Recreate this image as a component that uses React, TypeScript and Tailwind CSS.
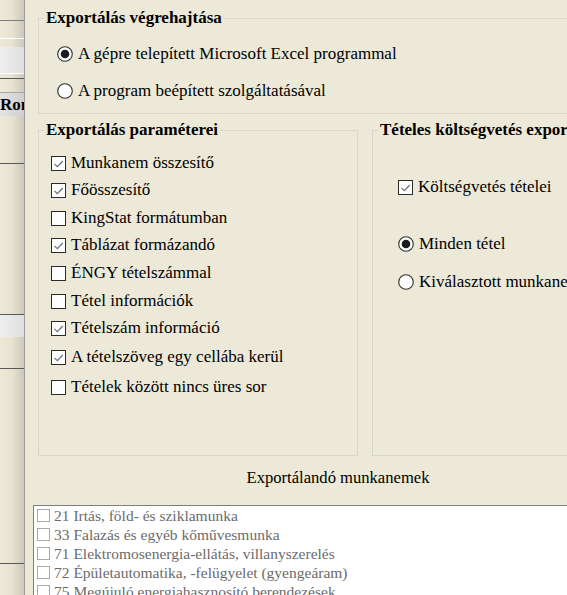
import type { ReactNode } from "react";

const serif = "font-['Liberation_Serif','Times_New_Roman',serif]";

function CheckBox({ checked }: { checked: boolean }) {
  return (
    <svg width="15" height="15" viewBox="0 0 15 15" className="shrink-0">
      <rect x="0.5" y="0.5" width="14" height="14" fill="#ffffff" stroke="#2a2a2a" />
      {checked && (
        <polyline
          points="3.5,7.8 6.3,10.6 11.8,5"
          fill="none"
          stroke="#6e6e6e"
          strokeWidth="1.2"
        />
      )}
    </svg>
  );
}

function Radio({ checked }: { checked: boolean }) {
  return (
    <svg width="16" height="16" viewBox="0 0 16 16" className="shrink-0">
      <circle cx="8" cy="8" r="7.3" fill="#ffffff" stroke="#2f2f2f" strokeWidth="1.1" />
      {checked && <circle cx="8" cy="8" r="4.3" fill="#1c1c1c" />}
    </svg>
  );
}

function Row({
  control,
  children,
  className = "",
}: {
  control: ReactNode;
  children: ReactNode;
  className?: string;
}) {
  return (
    <div className={`flex h-[20px] items-center whitespace-nowrap ${className}`}>
      {control}
      <span className="ml-[5px] text-[17px] leading-[20px] text-black">{children}</span>
    </div>
  );
}

function Legend({ children }: { children: ReactNode }) {
  return (
    <legend className="ml-[5px] whitespace-nowrap px-[2px] text-[17px] font-bold leading-[18px] text-black">
      {children}
    </legend>
  );
}

const params = [
  { label: "Munkanem összesítő", checked: true, mt: "mt-0" },
  { label: "Főösszesítő", checked: true, mt: "mt-[7px]" },
  { label: "KingStat formátumban", checked: false, mt: "mt-[8px]" },
  { label: "Táblázat formázandó", checked: true, mt: "mt-[7px]" },
  { label: "ÉNGY tételszámmal", checked: false, mt: "mt-[8px]" },
  { label: "Tétel információk", checked: false, mt: "mt-[8px]" },
  { label: "Tételszám információ", checked: true, mt: "mt-[7px]" },
  { label: "A tételszöveg egy cellába kerül", checked: true, mt: "mt-[9px]" },
  { label: "Tételek között nincs üres sor", checked: false, mt: "mt-[10px]" },
];

const workTypes = [
  "21 Irtás, föld- és sziklamunka",
  "33 Falazás és egyéb kőművesmunka",
  "71 Elektromosenergia-ellátás, villanyszerelés",
  "72 Épületautomatika, -felügyelet (gyengeáram)",
  "75 Megújuló energiahasznosító berendezések",
];

function SideStrip() {
  return (
    <div className="relative flex w-[24px] shrink-0 flex-col overflow-hidden bg-gradient-to-r from-[#ece9d8] via-[#e6e3d2] to-[#cdc9b8]">
      <div className="h-[20px]" />
      <div className="h-px bg-[#7d7d7d]" />
      <div className="h-[17px]" />
      <div className="h-px bg-white" />
      <div className="h-[8px]" />
      <div className="h-[26px] bg-gradient-to-r from-[#efefef] to-[#dedede]" />
      <div className="h-px bg-white" />
      <div className="h-[4px]" />
      <div className="h-px bg-[#5a5a5a]" />
      <div className="h-[13px]" />
      <div className="h-px bg-[#a8a8a8]" />
      <div className="h-[23px] bg-gradient-to-r from-[#e4e4e4] to-[#cfcfcf] text-[17px] font-bold leading-[23px] text-black">
        Rom
      </div>
      <div className="h-[47px]" />
      <div className="h-px bg-[#5a5a5a]" />
      <div className="h-[150px]" />
      <div className="h-px bg-[#5a5a5a]" />
      <div className="h-[22px] bg-gradient-to-r from-[#efefef] to-[#dedede]" />
      <div className="h-[31px]" />
      <div className="h-px bg-[#5a5a5a]" />
      <div className="h-[194px]" />
      <div className="h-px bg-[#5a5a5a]" />
    </div>
  );
}

export default function App() {
  return (
    <div className={`flex h-[595px] w-[567px] overflow-hidden bg-[#ece9d8] ${serif}`}>
      <SideStrip />
      <div className="w-px shrink-0 bg-[#9c9c9c]" />

      <div className="w-[700px] shrink-0 pl-[13px]">
        <fieldset className="mt-[9px] h-[105px] w-[640px] border border-[#d6d6cf]">
          <Legend>Exportálás végrehajtása</Legend>
          <div className="pl-[18px] pt-[17px]">
            <Row control={<Radio checked />}>A gépre telepített Microsoft Excel programmal</Row>
            <Row control={<Radio checked={false} />} className="mt-[17px]">
              A program beépített szolgáltatásával
            </Row>
          </div>
        </fieldset>

        <div className="mt-[7px] flex gap-[14px]">
          <fieldset className="h-[335px] w-[320px] border border-[#d6d6cf]">
            <Legend>Exportálás paraméterei</Legend>
            <div className="pl-[12px] pt-[14px]">
              {params.map((p) => (
                <Row key={p.label} control={<CheckBox checked={p.checked} />} className={p.mt}>
                  {p.label}
                </Row>
              ))}
            </div>
          </fieldset>

          <fieldset className="h-[335px] w-[320px] border border-[#d6d6cf]">
            <Legend>Tételes költségvetés exportálása</Legend>
            <div className="pl-[25px] pt-[38px]">
              <Row control={<CheckBox checked />}>Költségvetés tételei</Row>
              <Row control={<Radio checked />} className="mt-[37px]">
                Minden tétel
              </Row>
              <Row control={<Radio checked={false} />} className="mt-[18px]">
                Kiválasztott munkanemek
              </Row>
            </div>
          </fieldset>
        </div>

        <div className="ml-[-5px] w-[610px]">
          <p className="mt-[13px] text-center text-[16.6px] leading-[18px] text-black">
            Exportálandó munkanemek
          </p>
          <div className="mt-[18px] h-[120px] border border-[#7f7f7f] bg-white pl-[3px]">
            {workTypes.map((item) => (
              <div key={item} className="flex h-[19px] items-center whitespace-nowrap">
                <span className="h-[13px] w-[13px] shrink-0 border border-[#a9a9a9] bg-white" />
                <span className="ml-[4px] text-[15.5px] leading-[19px] text-[#6b6b6b]">{item}</span>
              </div>
            ))}
          </div>
        </div>
      </div>
    </div>
  );
}
